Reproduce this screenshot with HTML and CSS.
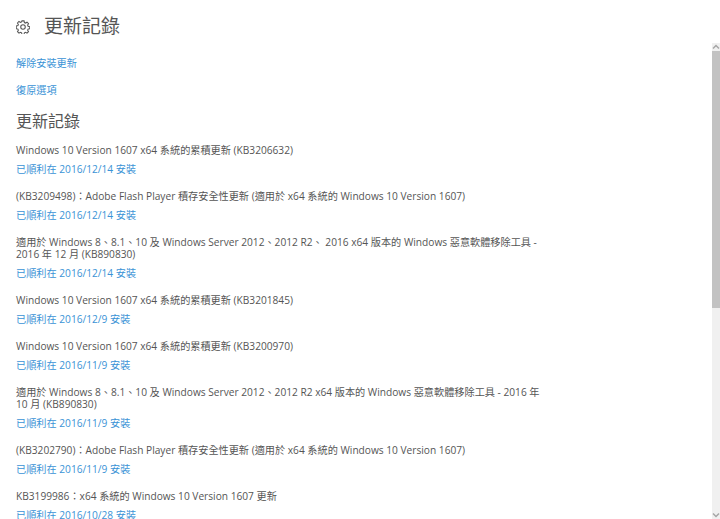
FILE: index.html
```html
<!DOCTYPE html>
<html lang="zh-Hant">
<head>
<meta charset="utf-8">
<title>更新記錄</title>
<link rel="stylesheet" href="styles.css">
</head>
<body>
<div class="page">
  <main class="content">
    <header class="title-row">
      <svg class="gear" viewBox="0 0 16 16" width="14" height="14" aria-hidden="true">
        <path d="M6.800 1h2.400l.4 1.900 1.300.6 1.700-1 1.700 1.700-1 1.700.5 1.300 1.900.4v2.400l-1.900.4-.5 1.300 1 1.700-1.700 1.700-1.700-1-1.300.5-.4 1.900H6.800l-.4-1.900-1.300-.5-1.700 1-1.700-1.700 1-1.700-.5-1.300-1.900-.4V6.800l1.900-.4.5-1.300-1-1.700 1.700-1.700 1.700 1 1.300-.6z" fill="none" stroke="#555" stroke-width="1.200"/>
        <circle cx="8" cy="8" r="2.600" fill="none" stroke="#555" stroke-width="1.200"/>
      </svg>
      <h1 class="title">更新記錄</h1>
    </header>
    <nav class="top-links">
      <a class="link">解除安裝更新</a>
      <a class="link">復原選項</a>
    </nav>
    <h2 class="subtitle">更新記錄</h2>
    <ul class="updates">
      <li class="update"><p class="name">Windows 10 Version 1607 x64 系統的累積更新 (KB3206632)</p><a class="link">已順利在 2016/12/14 安裝</a></li>
      <li class="update"><p class="name">(KB3209498)：Adobe Flash Player 積存安全性更新 (適用於 x64 系統的 Windows 10 Version 1607)</p><a class="link">已順利在 2016/12/14 安裝</a></li>
      <li class="update"><p class="name">適用於 Windows 8、8.1、10 及 Windows Server 2012、2012 R2、 2016 x64 版本的 Windows 惡意軟體移除工具 - 2016 年 12 月 (KB890830)</p><a class="link">已順利在 2016/12/14 安裝</a></li>
      <li class="update"><p class="name">Windows 10 Version 1607 x64 系統的累積更新 (KB3201845)</p><a class="link">已順利在 2016/12/9 安裝</a></li>
      <li class="update"><p class="name">Windows 10 Version 1607 x64 系統的累積更新 (KB3200970)</p><a class="link">已順利在 2016/11/9 安裝</a></li>
      <li class="update"><p class="name">適用於 Windows 8、8.1、10 及 Windows Server 2012、2012 R2 x64 版本的 Windows 惡意軟體移除工具 - 2016 年 10 月 (KB890830)</p><a class="link">已順利在 2016/11/9 安裝</a></li>
      <li class="update"><p class="name">(KB3202790)：Adobe Flash Player 積存安全性更新 (適用於 x64 系統的 Windows 10 Version 1607)</p><a class="link">已順利在 2016/11/9 安裝</a></li>
      <li class="update"><p class="name">KB3199986：x64 系統的 Windows 10 Version 1607 更新</p><a class="link">已順利在 2016/10/28 安裝</a></li>
    </ul>
  </main>
  <aside class="scrollbar" aria-hidden="true">
    <div class="arrow">
      <svg viewBox="0 0 8 8" width="8" height="8"><path d="M1 5.500 4 2.500 7 5.500" fill="none" stroke="#a6a6a6" stroke-width="1.500"/></svg>
    </div>
    <div class="thumb"></div>
    <div class="track"></div>
    <div class="arrow">
      <svg viewBox="0 0 8 8" width="8" height="8"><path d="M1 2.500 4 5.500 7 2.500" fill="none" stroke="#a6a6a6" stroke-width="1.500"/></svg>
    </div>
  </aside>
</div>
</body>
</html>
```
FILE: styles.css
```css
* { box-sizing: border-box; }
html, body { margin: 0; padding: 0; height: 100%; overflow: hidden; background: #fff; }
body {
  font-family: "Open Sans", "Noto Sans CJK TC", sans-serif;
  color: #555;
}
.page { display: flex; height: 519px; overflow: hidden; }
.content { flex: 1; min-width: 0; padding: 13px 0 0 16px; overflow: hidden; }
.title-row { display: flex; align-items: center; gap: 14px; height: 26px; margin-bottom: 18px; }
.gear { flex: none; margin-top: 1px; }
.title { margin: 0; font-size: 19px; font-weight: 400; line-height: 26px; color: #555; }
.link { display: block; font-size: 10.170px; line-height: 13px; color: #3a93d6; }
.top-links { display: flex; flex-direction: column; gap: 14px; margin-bottom: 13px; }
.subtitle { margin: 0 0 12px; font-size: 16px; font-weight: 400; line-height: 22px; color: #555; }
.updates { list-style: none; margin: 0; padding: 0; width: 530px; }
.update { margin-bottom: 14px; }
.name { margin: 0 0 7px; font-size: 10.170px; line-height: 12px; color: #555; }
.scrollbar { flex: none; width: 8px; display: flex; flex-direction: column; padding-top: 43px; }
.arrow { flex: none; height: 8px; background: #f0f0f0; display: flex; }
.thumb { flex: none; height: 257px; background: #c2c2c2; }
.track { flex: 1; background: #f0f0f0; }
```
